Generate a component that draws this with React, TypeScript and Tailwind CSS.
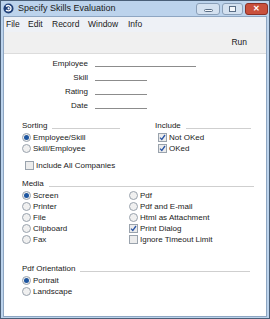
import React from "react";

const font = { fontFamily: '"Liberation Sans", Arial, sans-serif' };

function Radio({ on }: { on?: boolean }) {
  return (
    <span className="relative inline-flex h-[9px] w-[9px] shrink-0 items-center justify-center rounded-full border border-[#9aa3ad] bg-[#f0f0f0]">
      {on && <span className="h-[5px] w-[5px] rounded-full bg-[#1e56a0]" />}
    </span>
  );
}

function Check({ on }: { on?: boolean }) {
  return (
    <span className="inline-flex h-[9px] w-[9px] shrink-0 items-center justify-center border border-[#9aa3ad] bg-[#ececec]">
      {on && (
        <svg width="7" height="7" viewBox="0 0 7 7">
          <path d="M1 3.6 L2.8 5.4 L6 1" fill="none" stroke="#2a56a6" strokeWidth="1.3" />
        </svg>
      )}
    </span>
  );
}

function Opt({ kind, on, label }: { kind: "r" | "c"; on?: boolean; label: string }) {
  return (
    <div className="flex h-[11px] items-center gap-[2px]">
      {kind === "r" ? <Radio on={on} /> : <Check on={on} />}
      <span className="leading-none">{label}</span>
    </div>
  );
}

function Header({ label, lineW }: { label: string; lineW: number | string }) {
  return (
    <div className="flex h-[12px] items-center">
      <span className="leading-none">{label}</span>
      <span className="ml-[5px] mt-[4px] h-px bg-[#cfcfcf]" style={{ width: lineW }} />
    </div>
  );
}

function Field({ label, w }: { label: string; w: number }) {
  return (
    <div className="flex h-[14px] items-center">
      <span className="w-[84px] text-right leading-none">{label}</span>
      <span className="ml-[7px] mt-[5px] h-px bg-[#8c8c8c]" style={{ width: w }} />
    </div>
  );
}

export default function App() {
  return (
    <div
      className="flex h-[319px] w-[270px] flex-col overflow-hidden border border-[#4a5f78] bg-[#bcd3ec] text-[8px] text-[#1a1a1a]"
      style={font}
    >
      {/* title bar */}
      <div className="flex h-[15px] items-center bg-[#bcd3ec] pl-[2px]">
        <svg width="11" height="11" viewBox="0 0 11 11" className="shrink-0">
          <circle cx="5.5" cy="5.5" r="5" fill="#1f3f78" />
          <path d="M3 3.5 C5 1.5 8.5 3 8 5.8 C7.5 8 4.5 8.6 3 7" fill="none" stroke="#fff" strokeWidth="1.4" />
          <circle cx="5.6" cy="5.4" r="1.1" fill="#fff" />
        </svg>
        <span className="ml-[4px] text-[9px] text-[#1b1b1b]">Specify Skills Evaluation</span>
        <div className="ml-auto mr-[1px] flex items-center gap-[2px]">
          <div className="flex h-[12px] w-[24px] items-center justify-center rounded-[3px] border border-[#8a9fb8] bg-[#d4e1f0]">
            <div className="mt-[3px] h-[3px] w-[9px] rounded-sm border border-[#5a6e86] bg-[#f4f7fb]" />
          </div>
          <div className="flex h-[12px] w-[21px] items-center justify-center rounded-[3px] border border-[#8a9fb8] bg-[#d4e1f0]">
            <div className="h-[6px] w-[7px] border border-[#5a6e86] bg-[#f4f7fb]" />
          </div>
          <div className="flex h-[12px] w-[23px] items-center justify-center rounded-[3px] border border-[#8a3026] bg-[#c9503c] text-[8px] font-bold leading-none text-white">
            ✕
          </div>
        </div>
      </div>
      {/* body */}
      <div className="mx-[2px] mb-[1px] flex flex-1 flex-col border border-[#8ea6c2] bg-white">
        {/* menu */}
        <div className="flex h-[15px] items-center bg-[#eef1f6] pl-[2px] text-[8.5px]">
          <span className="w-[22px]">File</span>
          <span className="w-[24px]">Edit</span>
          <span className="w-[36px]">Record</span>
          <span className="w-[40px]">Window</span>
          <span>Info</span>
        </div>
        {/* toolbar */}
        <div className="flex h-[22px] items-center justify-end border-b border-[#dcdcdc] bg-[#f0f0f0] pr-[19px] text-[8.5px]">
          Run
        </div>
        {/* content */}
        <div className="flex flex-1 flex-col pl-[18px] pt-[3px]">
          <div className="-ml-[18px] flex flex-col">
            <Field label="Employee" w={101} />
            <Field label="Skill" w={52} />
            <Field label="Rating" w={52} />
            <Field label="Date" w={52} />
          </div>
          <div className="mt-[7px] flex">
            <div className="w-[133px]">
              <Header label="Sorting" lineW={68} />
              <Opt kind="r" on label="Employee/Skill" />
              <Opt kind="r" label="Skill/Employee" />
            </div>
            <div>
              <Header label="Include" lineW={65} />
              <div className="pl-[3px]">
                <Opt kind="c" on label="Not OKed" />
                <Opt kind="c" on label="OKed" />
              </div>
            </div>
          </div>
          <div className="mt-[6px] pl-[3px]">
            <Opt kind="c" label="Include All Companies" />
          </div>
          <div className="mt-[7px]">
            <Header label="Media" lineW={205} />
            <div className="flex">
              <div className="w-[107px]">
                <Opt kind="r" on label="Screen" />
                <Opt kind="r" label="Printer" />
                <Opt kind="r" label="File" />
                <Opt kind="r" label="Clipboard" />
                <Opt kind="r" label="Fax" />
              </div>
              <div>
                <Opt kind="r" label="Pdf" />
                <Opt kind="r" label="Pdf and E-mail" />
                <Opt kind="r" label="Html as Attachment" />
                <Opt kind="c" on label="Print Dialog" />
                <Opt kind="c" label="Ignore Timeout Limit" />
              </div>
            </div>
          </div>
          <div className="mt-[18px]">
            <Header label="Pdf Orientation" lineW={170} />
            <Opt kind="r" on label="Portrait" />
            <Opt kind="r" label="Landscape" />
          </div>
        </div>
      </div>
    </div>
  );
}
